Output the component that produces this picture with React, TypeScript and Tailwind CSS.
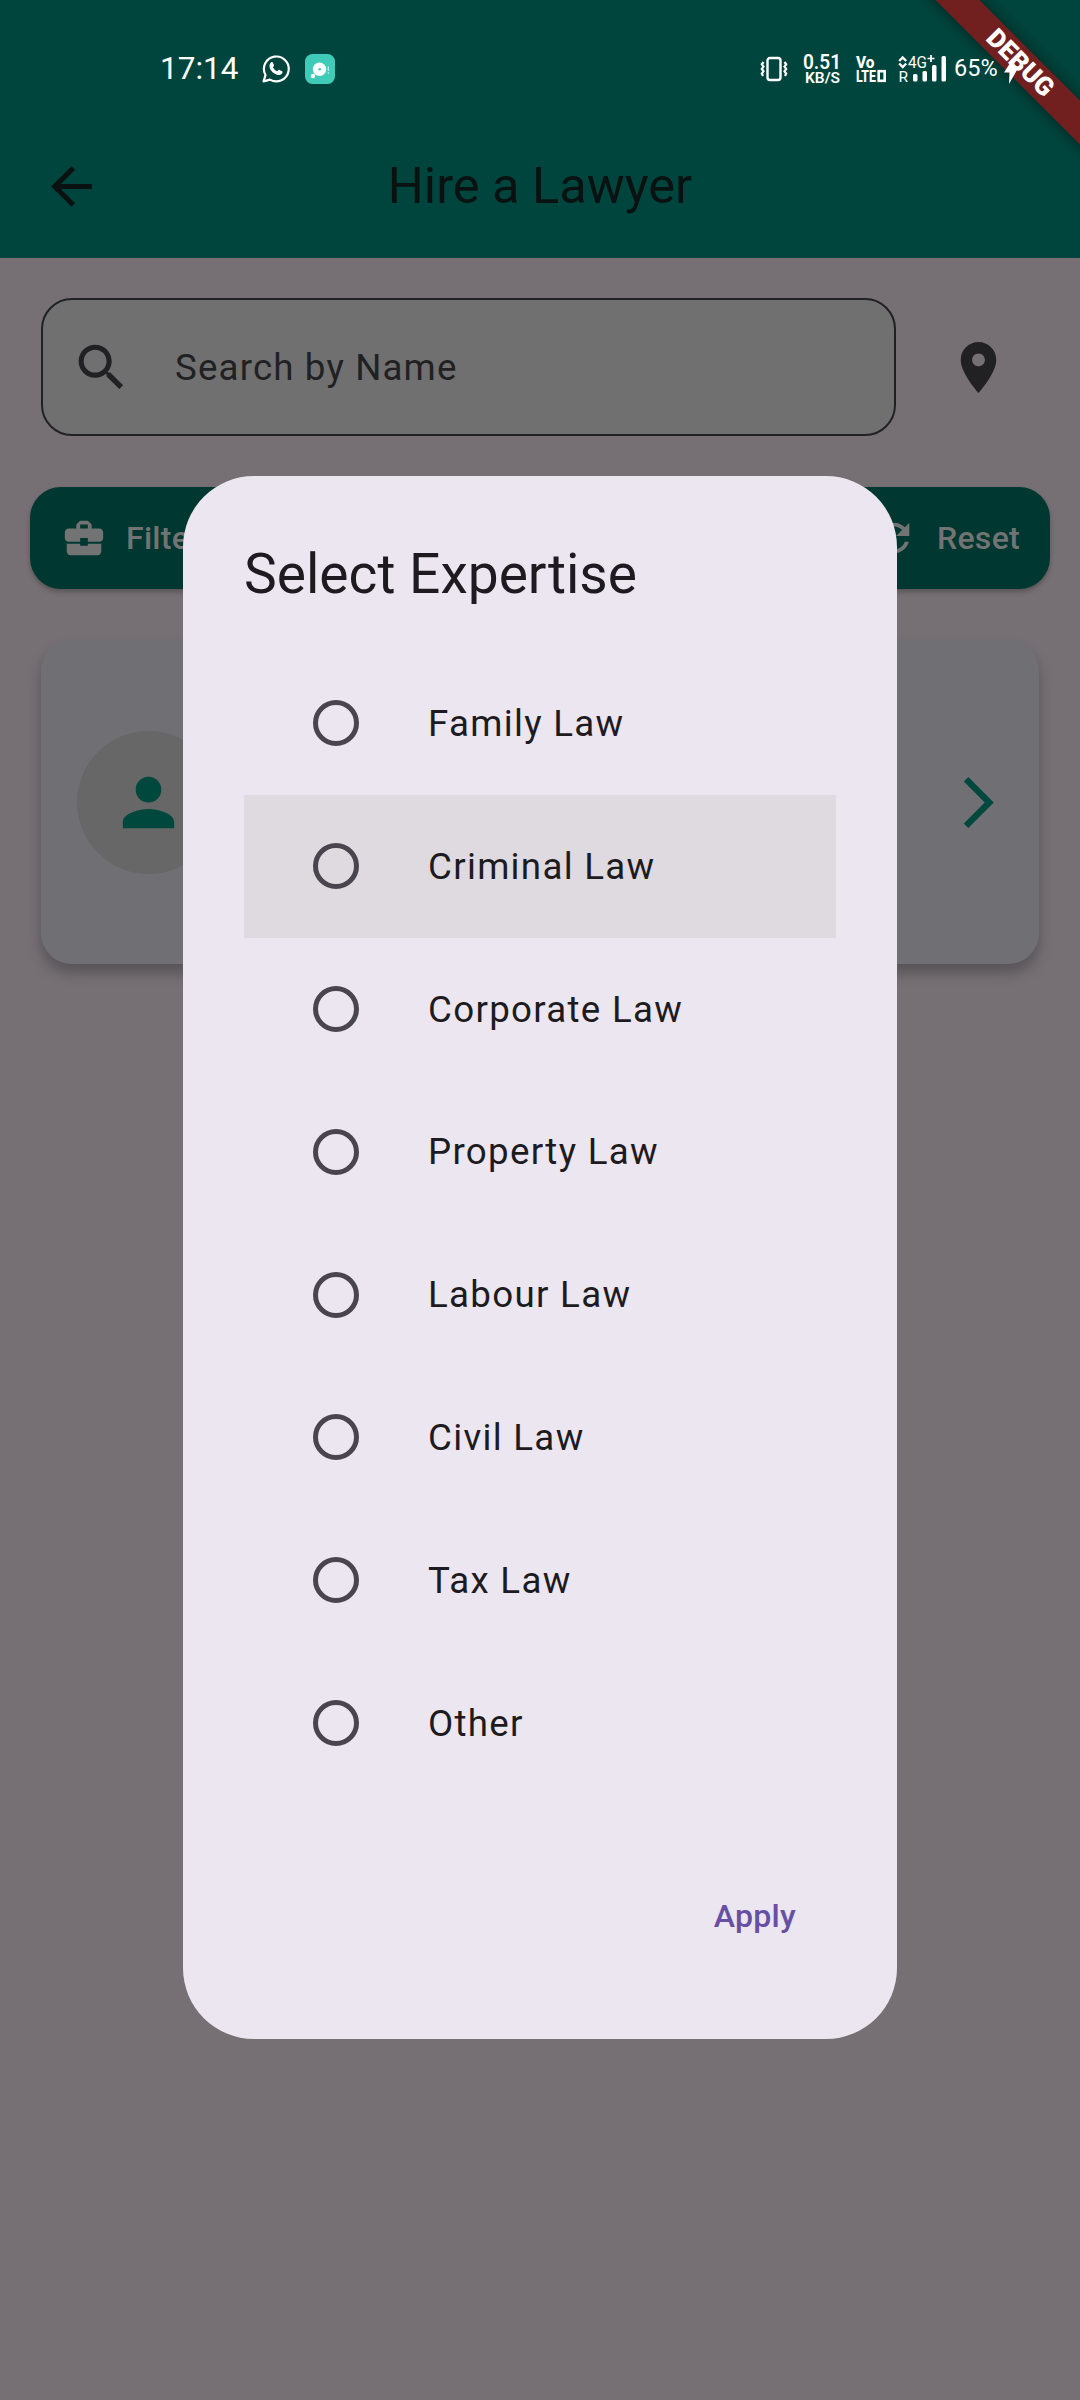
import type { ReactNode } from "react";

const EXPERTISE = [
  "Family Law",
  "Criminal Law",
  "Corporate Law",
  "Property Law",
  "Labour Law",
  "Civil Law",
  "Tax Law",
  "Other",
];

function Icon({ className, children }: { className: string; children: ReactNode }) {
  return (
    <svg viewBox="0 0 24 24" fill="currentColor" className={`block shrink-0 ${className}`}>
      {children}
    </svg>
  );
}

function WhatsAppIcon() {
  return (
    <svg viewBox="0 0 28 28" className="block h-7 w-7 shrink-0" fill="none">
      <path
        d="M1.6 26.4 3.5 20A12.4 12.4 0 1 1 8 24.6Z"
        stroke="white"
        strokeWidth="2.2"
        strokeLinejoin="round"
      />
      <path
        d="M9.2 7.2c.6-.5 1.3-.4 1.6.2l1.2 2.8c.2.5-.1.9-1.1 2 .9 1.9 2.5 3.3 4.5 4.1 1.1-1.4 1.5-1.6 2-1.4l2.7 1.3c.5.3.6.6.4 1.3-.5 1.7-2 2.7-3.7 2.5-5-.6-9.2-4.8-9.3-9.1 0-1.5.7-2.9 1.7-3.7Z"
        fill="white"
      />
    </svg>
  );
}

function ChatAppIcon() {
  return (
    <svg viewBox="0 0 30 30" className="block h-[30px] w-[30px] shrink-0">
      <rect width="30" height="30" rx="7.5" fill="#40cbb8" />
      <circle cx="14.5" cy="15.3" r="6.7" fill="white" />
      <circle cx="8" cy="22" r="2.2" fill="white" />
      <circle cx="14.7" cy="15.3" r="1.3" fill="#40cbb8" />
      <path d="M23.3 12.5v4.5M23.3 18.3v1.5" stroke="#c5f3ec" strokeWidth="1.2" />
    </svg>
  );
}

function VibrateIcon() {
  return (
    <svg viewBox="0 0 28 26" className="block h-[26px] w-7 shrink-0" fill="none" stroke="white">
      <rect x="7.5" y="2" width="13" height="22" rx="2.5" strokeWidth="2.4" />
      <path d="M3.5 6 1.8 8.3 3.5 10.6 1.8 13 3.5 15.3 1.8 17.6 3 20" strokeWidth="2.2" />
      <path d="M24.5 6l1.7 2.3-1.7 2.3 1.7 2.4-1.7 2.3 1.7 2.3-1.2 2.4" strokeWidth="2.2" />
    </svg>
  );
}

function NetworkSpeed() {
  return (
    <svg viewBox="0 0 38 30" className="block h-[30px] w-[38px] shrink-0 overflow-visible font-[Roboto]" fill="white">
      <text x="0" y="14.5" fontSize="20" fontWeight="600" textLength="38" lengthAdjust="spacingAndGlyphs">0.51</text>
      <text x="2" y="28.5" fontSize="15" fontWeight="600" textLength="35" lengthAdjust="spacingAndGlyphs">KB/S</text>
    </svg>
  );
}

function VolteIcon() {
  return (
    <svg viewBox="0 0 31 30" className="block h-[30px] w-[31px] shrink-0 overflow-visible font-[Roboto]" fill="white">
      <text x="0" y="13.5" fontSize="17" fontWeight="800" textLength="18.5" lengthAdjust="spacingAndGlyphs">Vo</text>
      <text x="0" y="28" fontSize="17" fontWeight="800" textLength="20" lengthAdjust="spacingAndGlyphs">LTE</text>
      <rect x="22.7" y="17.2" width="6" height="9.6" fill="none" stroke="white" strokeWidth="2.6" />
    </svg>
  );
}

function SignalIcon() {
  return (
    <svg viewBox="0 0 50 30" className="block h-[30px] w-[50px] shrink-0 overflow-visible font-[Roboto]" fill="white">
      <path d="M1.2 7 4.7 3.5 8.2 7M1.2 9.5 4.7 13l3.5-3.5" fill="none" stroke="white" strokeWidth="2.4" />
      <text x="0.5" y="28" fontSize="15.5">R</text>
      <text x="10" y="14" fontSize="17" textLength="19" lengthAdjust="spacingAndGlyphs">4G</text>
      <path d="M33 1v7M29.5 4.5h7" stroke="white" strokeWidth="1.7" />
      <rect x="15" y="20" width="4.5" height="7.5" rx="1.5" />
      <rect x="24.5" y="17" width="4.5" height="10.5" rx="1.5" />
      <rect x="34" y="11" width="4.5" height="16.5" rx="1.5" />
      <rect x="43.5" y="2" width="4.5" height="25.5" rx="1.5" />
    </svg>
  );
}

function StatusBar() {
  return (
    <div className="relative z-20 flex h-[115px] items-start justify-between text-white">
      <div className="ml-[160px] flex h-[138px] items-center">
        <span className="w-[79px] text-[31.5px] leading-none whitespace-nowrap">17:14</span>
        <div className="ml-[23px]">
          <WhatsAppIcon />
        </div>
        <div className="ml-[15px]">
          <ChatAppIcon />
        </div>
      </div>
      <div className="mr-[61px] flex h-[138px] items-center">
        <VibrateIcon />
        <div className="ml-[15px]">
          <NetworkSpeed />
        </div>
        <div className="ml-[15px]">
          <VolteIcon />
        </div>
        <div className="ml-[11px]">
          <SignalIcon />
        </div>
        <span className="ml-[6px] w-[46px] text-[23.5px] leading-none whitespace-nowrap">65%</span>
        <svg viewBox="0 0 15 24" className="mt-[5px] ml-[4px] block h-[24px] w-[15px]" fill="white">
          <path d="M8 0 0 12.5h5.5L5 24 14.5 7.5H9.5L11 0Z" />
        </svg>
      </div>
    </div>
  );
}

function AppBar() {
  return (
    <div className="flex h-[143px] items-center text-[#0a1211]">
      <Icon className="ml-[41px] h-[61px] w-[61px]">
        <path d="M20 11H7.83l5.59-5.59L12 4l-8 8 8 8 1.41-1.41L7.83 13H20v-2z" />
      </Icon>
      <h1 className="mr-[102px] flex-1 text-center text-[50.5px] leading-none font-normal">Hire a Lawyer</h1>
    </div>
  );
}

function DebugBanner() {
  return (
    <div className="pointer-events-none absolute top-0 right-0 z-10 h-[200px] w-[200px] overflow-hidden">
      <div className="absolute top-[45.5px] left-[-11px] flex h-[30.6px] w-[300px] rotate-45 items-center justify-center bg-[#721f1f] shadow-[0_0_15px_rgba(0,0,0,0.5)]">
        <span className="ml-[4px] text-[26px] leading-none font-black text-white">DEBUG</span>
      </div>
    </div>
  );
}

function SearchRow() {
  return (
    <div className="flex h-[138px] items-center">
      <div className="flex h-full w-[855px] items-center rounded-[31px] border-[2.5px] border-[#212124] bg-[#707070] text-[#212124]">
        <Icon className="ml-[28px] h-[61px] w-[61px]">
          <path d="M15.5 14h-.79l-.28-.27C15.41 12.59 16 11.11 16 9.5 16 5.91 13.09 3 9.5 3S3 5.91 3 9.5 5.91 16 9.5 16c1.61 0 3.09-.59 4.23-1.57l.27.28v.79l5 4.99L20.49 19l-4.99-5zm-6 0C7.01 14 5 11.99 5 9.5S7.01 5 9.5 5 14 7.01 14 9.5 11.99 14 9.5 14z" />
        </Icon>
        <span className="mt-[2px] ml-[43px] text-[36.7px] leading-none tracking-[1.15px]">Search by Name</span>
      </div>
      <Icon className="ml-[52px] h-[61px] w-[61px] text-[#212124]">
        <path d="M12 2C8.13 2 5 5.13 5 9c0 5.25 7 13 7 13s7-7.75 7-13c0-3.87-3.13-7-7-7zm0 9.5c-1.38 0-2.5-1.12-2.5-2.5s1.12-2.5 2.5-2.5 2.5 1.12 2.5 2.5-1.12 2.5-2.5 2.5z" />
      </Icon>
    </div>
  );
}

function FilterRow() {
  return (
    <div className="flex justify-between text-[32.1px] leading-none font-medium text-[#717473]">
      <div className="flex h-[102px] w-[480px] items-center rounded-[31px] bg-[#003730] pl-[31px] shadow-[0_3px_5px_rgba(0,0,0,0.25)]">
        <Icon className="h-[46px] w-[46px]">
          <path d="M10 16v-1H3.01L3 19c0 1.11.89 2 2 2h14c1.11 0 2-.89 2-2v-4h-7v1h-4zm10-9h-4.01V5l-2-2h-4l-2 2v2H4c-1.1 0-2 .9-2 2v3c0 1.11.89 2 2 2h6v-2h4v2h6c1.1 0 2-.9 2-2V9c0-1.1-.9-2-2-2zm-6 0h-4V5h4v2z" />
        </Icon>
        <span className="ml-[19px] tracking-[0.25px]">Filter by Expertise</span>
      </div>
      <div className="flex h-[102px] items-center rounded-[31px] bg-[#003730] pr-[30px] pl-[41px] shadow-[0_3px_5px_rgba(0,0,0,0.25)]">
        <Icon className="h-[46px] w-[46px]">
          <path d="M17.65 6.35C16.2 4.9 14.21 4 12 4c-4.42 0-7.99 3.58-7.99 8s3.57 8 7.99 8c3.73 0 6.84-2.55 7.73-6h-2.08c-.82 2.33-3.04 4-5.65 4-3.31 0-6-2.69-6-6s2.69-6 6-6c1.66 0 3.14.69 4.22 1.78L13 11h7V4l-2.35 2.35z" />
        </Icon>
        <span className="ml-[20px] tracking-[0.25px]">Reset</span>
      </div>
    </div>
  );
}

function LawyerCard() {
  return (
    <div className="flex h-[324px] items-center justify-between rounded-[31px] bg-[#706f74] pr-[30px] pl-[36px] text-[#00473e] shadow-[0_9px_14px_rgba(0,0,0,0.26)]">
      <div className="flex h-[143px] w-[143px] items-center justify-center rounded-full bg-[#666766]">
        <Icon className="h-[77px] w-[77px]">
          <path d="M12 12c2.21 0 4-1.79 4-4s-1.79-4-4-4-4 1.79-4 4 1.79 4 4 4zm0 2c-2.67 0-8 1.34-8 4v2h16v-2c0-2.66-5.33-4-8-4z" />
        </Icon>
      </div>
      <Icon className="h-[61px] w-[61px]">
        <path d="M6.23 20.23 8 22l10-10L8 2 6.23 3.77 14.46 12z" />
      </Icon>
    </div>
  );
}

function ExpertiseDialog() {
  return (
    <div className="absolute inset-0 flex items-center justify-center pt-[115px]">
      <div className="flex h-[1563px] w-[714px] flex-col rounded-[71px] bg-[#ece6f0] p-[61px] text-[#1d1b20]">
        <h2 className="h-[74px] text-[55.1px] leading-[74px] font-normal whitespace-nowrap">Select Expertise</h2>
        <div className="mt-[41px] flex flex-col">
          {EXPERTISE.map((name) => (
            <label
              key={name}
              className={`flex h-[142.8px] items-center pl-[69px] ${name === "Criminal Law" ? "bg-[#dfdae0]" : ""}`}
            >
              <span className="h-[46px] w-[46px] shrink-0 rounded-full border-[5px] border-[#49454f]" />
              <span className="mt-[2px] ml-[69px] text-[36.7px] leading-none tracking-[1.3px] whitespace-nowrap">{name}</span>
            </label>
          ))}
        </div>
        <div className="mt-auto flex h-[122px] items-center justify-end pr-[40px] pb-[2px]">
          <button className="text-[32.1px] leading-none font-medium tracking-[0.25px] text-[#6750a4]">Apply</button>
        </div>
      </div>
    </div>
  );
}

export default function App() {
  return (
    <div className="relative h-[2400px] w-[1080px] overflow-hidden bg-[#767074] font-[Roboto,sans-serif]">
      <header className="h-[258px] bg-[#00453d]">
        <StatusBar />
        <AppBar />
      </header>
      <main>
        <div className="px-[41px] pt-[40px]">
          <SearchRow />
        </div>
        <div className="mt-[51px] px-[30px]">
          <FilterRow />
        </div>
        <div className="mt-[51px] px-[41px]">
          <LawyerCard />
        </div>
      </main>
      <ExpertiseDialog />
      <DebugBanner />
    </div>
  );
}
